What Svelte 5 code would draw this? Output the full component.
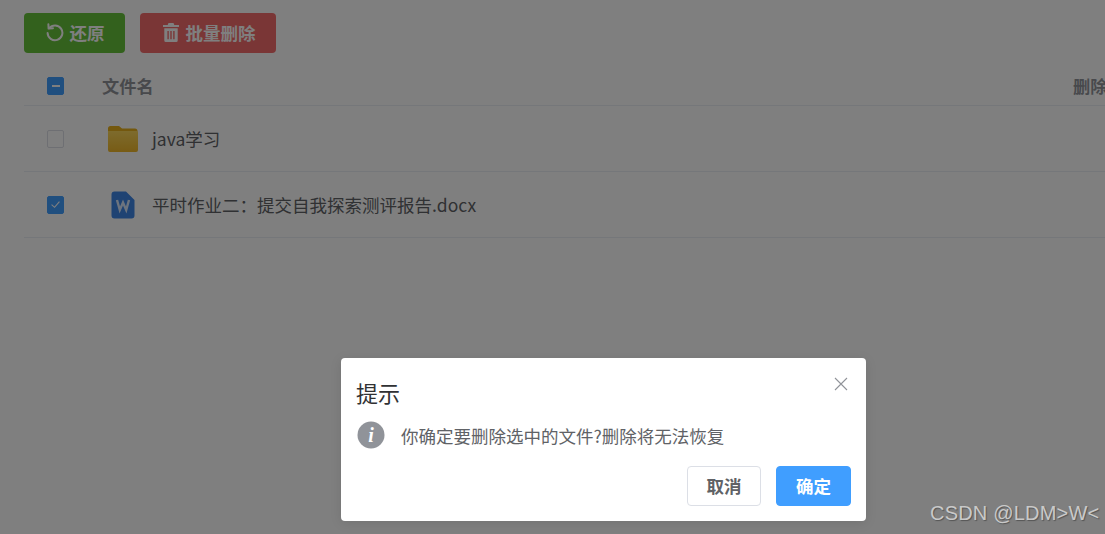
<script>
  let { onClose } = $props();

  const files = [
    { name: 'java学习', kind: 'folder', checked: false },
    { name: '平时作业二：提交自我探索测评报告.docx', kind: 'word', checked: true },
  ];
</script>

<div class="page">
  <div class="toolbar">
    <button class="btn restore">
      <svg viewBox="0 0 20 20" width="20" height="20" fill="none" stroke="currentColor" stroke-width="2" stroke-linecap="round" stroke-linejoin="round">
        <path d="M4.2 6.2A7.400 7.400 0 1 1 2.600 11" />
        <path d="M3.400 2.200 L3.600 6.600 L8 6.200" />
      </svg>
      还原
    </button>
    <button class="btn remove">
      <svg viewBox="0 0 20 20" width="20" height="22" fill="currentColor">
        <path d="M7.500 1h5l.8 1.900H18v2.100H2V2.900h4.700z" />
        <path fill-rule="evenodd" d="M3.300 6.300h13.400V18.500A1.500 1.500 0 0 1 15.200 20H4.800a1.500 1.500 0 0 1-1.500-1.500zM6.400 9v8.300h1.400V9zm2.900 0v8.300h1.400V9zm2.900 0v8.300h1.400V9z" />
      </svg>
      批量删除
    </button>
  </div>

  <div class="head row">
    <div class="check-cell"><span class="box on"><i class="dash"></i></span></div>
    <div class="name-cell">文件名</div>
    <div class="time-cell">删除时间</div>
  </div>

  {#each files as f}
    <div class="row item">
      <div class="check-cell">
        <span class="box" class:on={f.checked}>
          {#if f.checked}
            <svg viewBox="0 0 16 16" width="15" height="15" fill="none" stroke="#fff" stroke-width="1.200"><path d="M3.800 8.200 7 11l5.200-6" /></svg>
          {/if}
        </span>
      </div>
      <div class="file-icon">
        {#if f.kind === 'folder'}
          <svg viewBox="0 0 32 28" width="32" height="28">
            <defs>
              <linearGradient id="folder-front" x1="0" y1="0" x2="0" y2="1">
                <stop offset="0" stop-color="#fbd75a" />
                <stop offset="1" stop-color="#f0b72a" />
              </linearGradient>
            </defs>
            <path fill="#e8b11c" d="M1 3.500a2.500 2.500 0 0 1 2.500-2.500h8.500l3 2.500h13A2.500 2.500 0 0 1 30.500 6v4H1z" />
            <path fill="url(#folder-front)" d="M1 6h28.500A1.500 1.500 0 0 1 31 7.500V25a2 2 0 0 1-2 2H3a2 2 0 0 1-2-2z" />
          </svg>
        {:else}
          <svg viewBox="0 0 24 28" width="24" height="28">
            <path fill="#3f86e6" d="M3.500.5h11.500L23.500 9V24.500a3 3 0 0 1-3 3H3.500a3 3 0 0 1-3-3V3.500a3 3 0 0 1 3-3z" />
            <path fill="none" stroke="#dbe9fc" stroke-width="2.400" d="M6 9 8.800 19l3.200-7.500 3.200 7.500L18 9" />
          </svg>
        {/if}
      </div>
      <div class="file-name">{f.name}</div>
    </div>
  {/each}

  <div class="overlay">
    <div class="dialog">
      <div class="title">提示</div>
      <button class="close" aria-label="close" onclick={onClose}>
        <svg viewBox="0 0 14 14" width="14" height="14" stroke="#909399" stroke-width="1.100"><path d="M1 1l12 12M13 1 1 13" /></svg>
      </button>
      <div class="msg">
        <svg viewBox="0 0 28 28" width="28" height="28">
          <circle cx="14" cy="14" r="13.500" fill="#909399" />
          <text x="14" y="21" text-anchor="middle" class="info-i">i</text>
        </svg>
        <span>你确定要删除选中的文件?删除将无法恢复</span>
      </div>
      <div class="actions">
        <button class="dlg-btn cancel">取消</button>
        <button class="dlg-btn ok">确定</button>
      </div>
    </div>
    <div class="mark">CSDN @LDM&gt;W&lt;</div>
  </div>
</div>

<style>
  :global(body) { margin: 0; background: #fff; overflow: hidden; }
  .page { position: relative; width: 1105px; height: 534px; overflow: hidden; font-family: "Noto Sans CJK SC", "Noto Sans", sans-serif; color: #606266; background: #fff; }
  .toolbar { display: flex; gap: 15px; padding: 13px 24px 0; height: 66px; box-sizing: border-box; }
  .btn { display: flex; align-items: center; justify-content: center; gap: 5px; height: 40px; border: none; border-radius: 4px; color: #fff; font: 700 17.5px "Noto Sans CJK SC", sans-serif; padding: 0 0 2px; box-sizing: border-box; }
  .restore { width: 101px; background: #67c23a; }
  .remove { width: 136px; background: #f56c6c; }
  .row { display: flex; align-items: center; margin-left: 24px; border-bottom: 1px solid #ebeef5; box-sizing: border-box; }
  .head { height: 40px; font-weight: 700; font-size: 17.2px; color: #909399; white-space: nowrap; position: relative; }
  .item { height: 66px; font-size: 17.5px; }
  .check-cell { width: 23px; padding-left: 23px; flex: none; display: flex; }
  .box { width: 15px; height: 16px; border: 1px solid #dcdfe6; border-radius: 2px; background: #fff; display: flex; align-items: center; justify-content: center; box-sizing: content-box; }
  .box.on { background: #409eff; border-color: #409eff; }
  .box svg { display: block; flex: none; }
  .dash { display: block; width: 8px; height: 2px; background: #fff; }
  .name-cell { margin-left: 32px; padding-bottom: 1px; }
  .time-cell { position: absolute; left: 1049px; }
  .file-icon { width: 32px; margin-left: 37px; margin-right: 13px; display: flex; justify-content: center; }
  .file-icon svg { display: block; }
  .file-name { color: #606266; white-space: nowrap; }
  .overlay { position: absolute; inset: 0; background: rgba(0, 0, 0, 0.5); }
  .dialog { position: absolute; left: 341px; top: 358px; width: 525px; height: 163px; box-sizing: border-box; background: #fff; border-radius: 4px; padding: 19px 15px 15px; box-shadow: 0 2px 12px rgba(0, 0, 0, 0.1); }
  .title { font-size: 22px; line-height: 30px; color: #303133; }
  .close { position: absolute; top: 19px; right: 18px; width: 14px; height: 14px; padding: 0; border: none; background: none; }
  .close svg { display: block; }
  .msg { display: flex; align-items: center; gap: 16px; margin-top: 14px; padding-left: 1px; font-size: 17.5px; color: #606266; height: 28px; }
  .info-i { font: italic 700 20px "Liberation Serif", serif; fill: #fff; }
  .actions { display: flex; justify-content: flex-end; gap: 15px; margin-top: 17px; }
  .dlg-btn { width: 74px; height: 40px; border-radius: 4px; font: 700 17.5px "Noto Sans CJK SC", sans-serif; padding: 0 0 2px; box-sizing: border-box; }
  .ok { width: 75px; }
  .cancel { background: #fff; border: 1px solid #dcdfe6; color: #606266; }
  .ok { background: #409eff; border: 1px solid #409eff; color: #fff; }
  .mark { position: absolute; left: 930px; top: 500px; font: 20px "Liberation Sans", sans-serif; letter-spacing: 0.2px; color: #c9c9c9; white-space: nowrap; line-height: 26px; text-shadow: 1px 1px 1px #555; }
</style>
